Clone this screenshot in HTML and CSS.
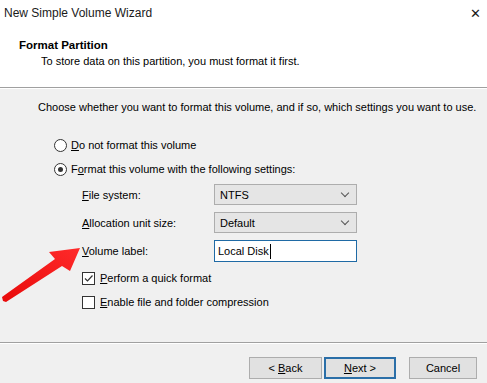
FILE: index.html
```html
<!DOCTYPE html>
<html lang="en">
<head>
    <meta charset="UTF-8">
    <title>New Simple Volume Wizard</title>
    <link rel="stylesheet" href="styles.css">
</head>
<body>
    <div class="wizard">
        <!-- window title -->
        <div class="titlebar">
            <span>New Simple Volume Wizard</span>
            <span class="close">&#x2715;</span>
        </div>
        <!-- page header -->
        <div class="header">
            <div class="header-title">Format Partition</div>
            <div class="header-sub">To store data on this partition, you must format it first.</div>
        </div>
        <div class="rule"></div>

        <div class="content">
            <p class="intro">Choose whether you want to format this volume, and if so, which settings you want to use.</p>

            <div class="option">
                <span class="radio"></span>
                <span><u>D</u>o not format this volume</span>
            </div>
            <div class="option">
                <span class="radio checked"></span>
                <span>F<u>o</u>rmat this volume with the following settings:</span>
            </div>

            <div class="settings">
                <label><u>F</u>ile system:</label>
                <div class="select">NTFS<span class="chev"></span></div>
                <label><u>A</u>llocation unit size:</label>
                <div class="select">Default<span class="chev"></span></div>
                <label><u>V</u>olume label:</label>
                <div class="textbox">Local Disk<span class="caret"></span></div>
            </div>

            <div class="check-row">
                <span class="check">
                    <svg width="11" height="11" viewBox="0 0 11 11"><path d="M2 5.5 L4.5 8 L9.5 2.5" fill="none" stroke="#333" stroke-width="1.2"/></svg>
                </span>
                <span><u>P</u>erform a quick format</span>
            </div>
            <div class="check-row">
                <span class="check"></span>
                <span><u>E</u>nable file and folder compression</span>
            </div>
        </div>

        <div class="rule"></div>
        <div class="buttons">
            <button class="btn btn-back">&lt; <u>B</u>ack</button>
            <button class="btn btn-next"><u>N</u>ext &gt;</button>
            <button class="btn btn-cancel">Cancel</button>
        </div>

        <!-- red pointer arrow drawn over the dialog -->
        <svg class="pointer" width="487" height="383" viewBox="0 0 487 383">
            <defs>
                <linearGradient id="red" x1="0" y1="1" x2="1" y2="0">
                    <stop offset="0" stop-color="#e80a0a"/>
                    <stop offset="1" stop-color="#ff2a2a"/>
                </linearGradient>
            </defs>
            <polygon points="2,297 55,259 49,252 80,248 70,271 62,266 6,302 3,301" fill="url(#red)"/>
        </svg>
    </div>
</body>
</html>
```

FILE: styles.css
```css
body {
    margin: 0;
    background: #f0f0f0;
    font-family: "Liberation Sans", Arial, sans-serif;
    font-size: 11px;
    color: #000;
}

.wizard {
    position: relative;
    width: 487px;
    height: 383px;
    overflow: hidden;
    white-space: nowrap;
}

.titlebar {
    height: 26px;
    background: #fff;
    display: flex;
    align-items: center;
    justify-content: space-between;
    padding: 0 4px;
    font-size: 12px;
    color: #1a1a1a;
}

.close {
    font-size: 13px;
    margin-right: 2px;
}

.header {
    height: 61px;
    background: #fff;
    box-sizing: border-box;
    padding: 11px 0 0 19px;
}

.header-title {
    font-weight: bold;
    font-size: 11.5px;
    line-height: 16px;
}

.header-sub {
    padding-left: 22px;
    line-height: 16px;
}

/* etched divider line */
.rule {
    border-top: 1px solid #a0a0a0;
    border-bottom: 1px solid #fff;
}

.content {
    height: 253px;
    box-sizing: border-box;
    padding: 10px 0 0 38px;
}

.intro {
    margin: 0 0 18px;
    line-height: 16px;
}

.option {
    height: 24px;
    display: flex;
    align-items: center;
    margin-left: 16px;
}

.radio {
    width: 11px;
    height: 11px;
    border: 1px solid #333;
    border-radius: 50%;
    background: #fff;
    margin-right: 4px;
    position: relative;
}

.radio.checked::after {
    content: "";
    position: absolute;
    left: 3px;
    top: 3px;
    width: 5px;
    height: 5px;
    border-radius: 50%;
    background: #333;
}

.settings {
    display: grid;
    grid-template-columns: 132px 143px;
    grid-template-rows: 21px 21px 22px;
    row-gap: 7px;
    margin: 3px 0 4px 44px;
    align-items: center;
}

.settings label {
    line-height: 16px;
}

.select {
    height: 21px;
    box-sizing: border-box;
    border: 1px solid #adadad;
    background: #e5e5e5;
    padding-left: 5px;
    display: flex;
    align-items: center;
    justify-content: space-between;
}

.chev {
    width: 5px;
    height: 5px;
    border-right: 1px solid #555;
    border-bottom: 1px solid #555;
    transform: rotate(45deg);
    margin: 0 8px 3px 0;
}

.textbox {
    height: 22px;
    box-sizing: border-box;
    border: 1px solid #1f6aa5;
    background: #fff;
    padding-left: 3px;
    display: flex;
    align-items: center;
}

.caret {
    width: 1px;
    height: 15px;
    background: #000;
    margin-left: 1px;
}

.check-row {
    height: 24px;
    display: flex;
    align-items: center;
    margin-left: 44px;
}

.check {
    width: 11px;
    height: 11px;
    border: 1px solid #333;
    background: #fff;
    margin-right: 5px;
    display: flex;
}

.buttons {
    display: flex;
    justify-content: flex-end;
    padding: 13px 10px 0 0;
}

.btn {
    height: 22px;
    box-sizing: border-box;
    border: 1px solid #adadad;
    background: #e1e1e1;
    font-family: inherit;
    font-size: 11px;
    color: #000;
    padding: 0;
}

.btn-back {
    width: 73px;
}

.btn-next {
    width: 72px;
    margin-left: 2px;
    border: 2px solid #2b6fa8;
}

.btn-cancel {
    width: 68px;
    margin-left: 13px;
}

.pointer {
    position: absolute;
    left: 0;
    top: 0;
    pointer-events: none;
}
```
